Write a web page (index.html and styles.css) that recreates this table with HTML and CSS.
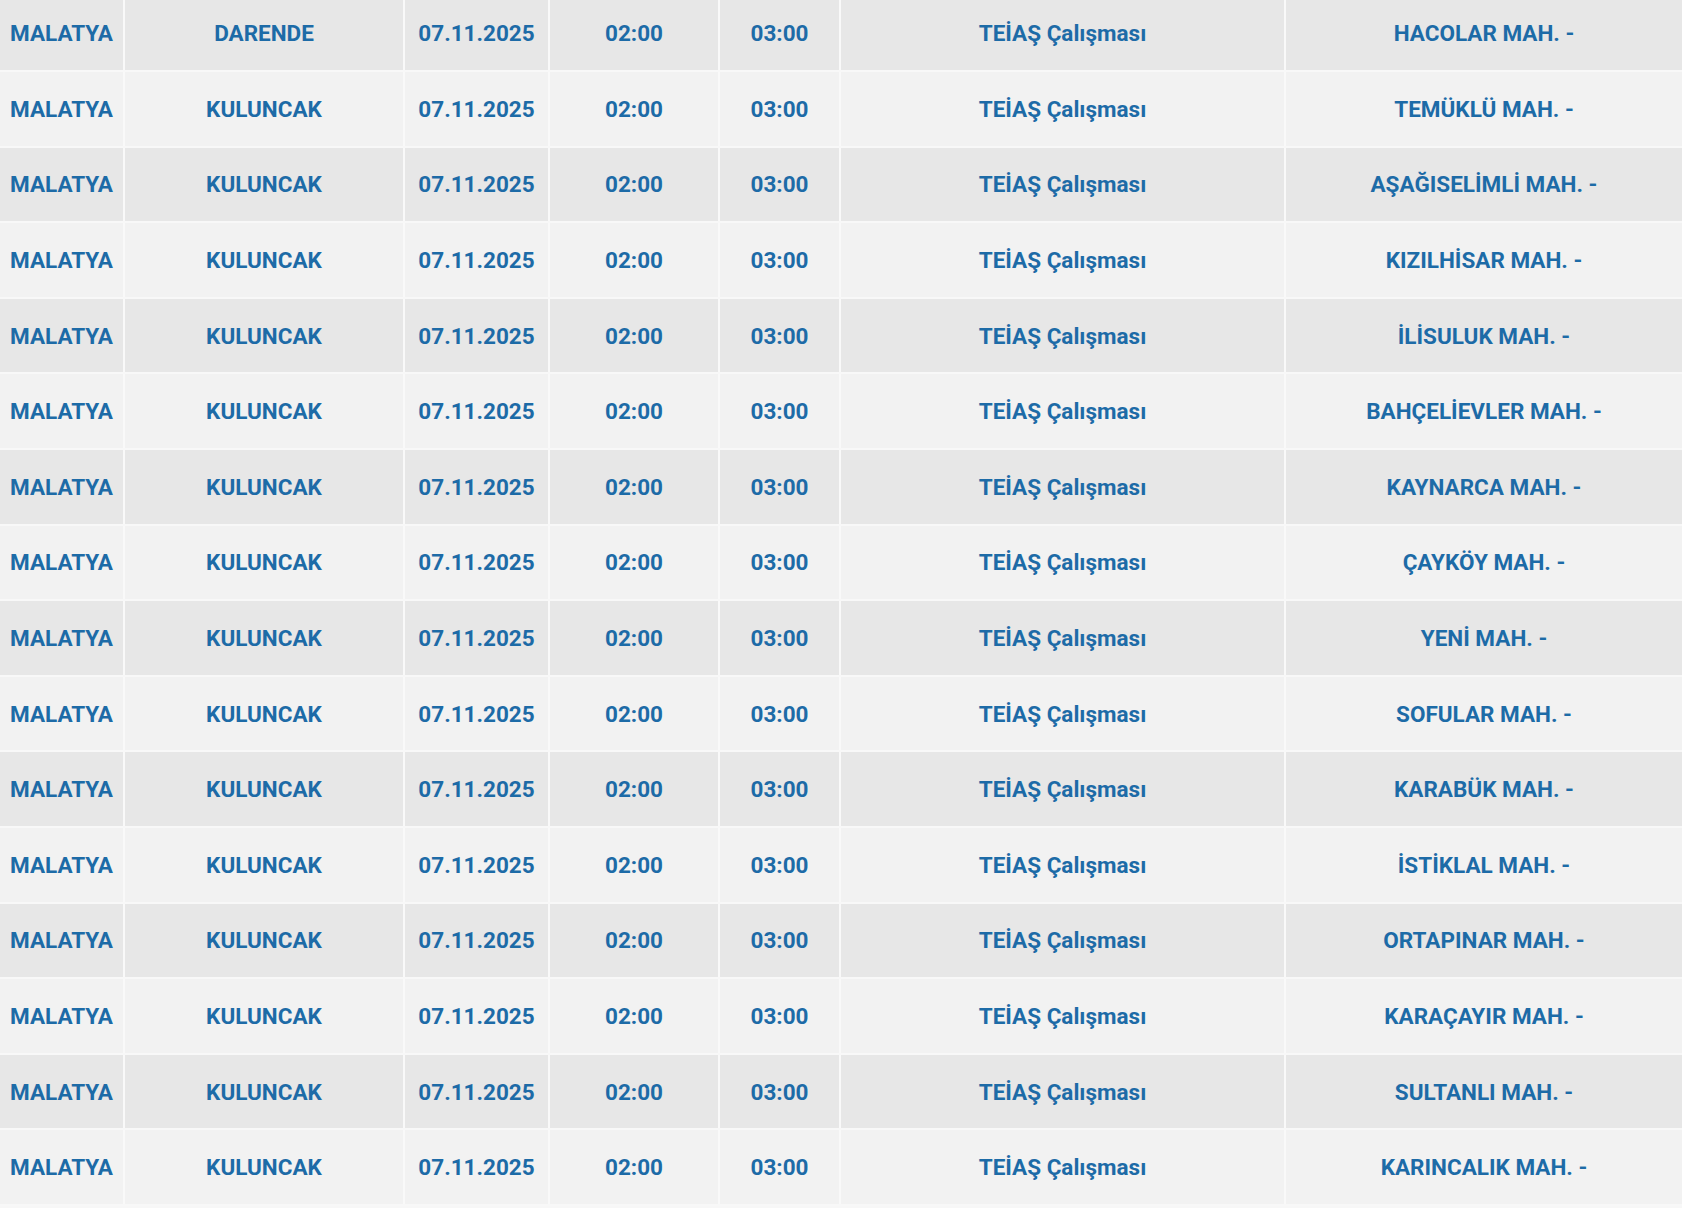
FILE: index.html
```html
<!DOCTYPE html>
<html lang="tr">
<head>
<meta charset="utf-8">
<title>Kesinti Listesi</title>
<link rel="stylesheet" href="styles.css">
</head>
<body>
<div class="table">
  <div class="row"><div class="c">MALATYA</div><div class="c">DARENDE</div><div class="c">07.11.2025</div><div class="c">02:00</div><div class="c">03:00</div><div class="c">TEİAŞ Çalışması</div><div class="c">HACOLAR MAH. -</div></div>
  <div class="row"><div class="c">MALATYA</div><div class="c">KULUNCAK</div><div class="c">07.11.2025</div><div class="c">02:00</div><div class="c">03:00</div><div class="c">TEİAŞ Çalışması</div><div class="c">TEMÜKLÜ MAH. -</div></div>
  <div class="row"><div class="c">MALATYA</div><div class="c">KULUNCAK</div><div class="c">07.11.2025</div><div class="c">02:00</div><div class="c">03:00</div><div class="c">TEİAŞ Çalışması</div><div class="c">AŞAĞISELİMLİ MAH. -</div></div>
  <div class="row"><div class="c">MALATYA</div><div class="c">KULUNCAK</div><div class="c">07.11.2025</div><div class="c">02:00</div><div class="c">03:00</div><div class="c">TEİAŞ Çalışması</div><div class="c">KIZILHİSAR MAH. -</div></div>
  <div class="row"><div class="c">MALATYA</div><div class="c">KULUNCAK</div><div class="c">07.11.2025</div><div class="c">02:00</div><div class="c">03:00</div><div class="c">TEİAŞ Çalışması</div><div class="c">İLİSULUK MAH. -</div></div>
  <div class="row"><div class="c">MALATYA</div><div class="c">KULUNCAK</div><div class="c">07.11.2025</div><div class="c">02:00</div><div class="c">03:00</div><div class="c">TEİAŞ Çalışması</div><div class="c">BAHÇELİEVLER MAH. -</div></div>
  <div class="row"><div class="c">MALATYA</div><div class="c">KULUNCAK</div><div class="c">07.11.2025</div><div class="c">02:00</div><div class="c">03:00</div><div class="c">TEİAŞ Çalışması</div><div class="c">KAYNARCA MAH. -</div></div>
  <div class="row"><div class="c">MALATYA</div><div class="c">KULUNCAK</div><div class="c">07.11.2025</div><div class="c">02:00</div><div class="c">03:00</div><div class="c">TEİAŞ Çalışması</div><div class="c">ÇAYKÖY MAH. -</div></div>
  <div class="row"><div class="c">MALATYA</div><div class="c">KULUNCAK</div><div class="c">07.11.2025</div><div class="c">02:00</div><div class="c">03:00</div><div class="c">TEİAŞ Çalışması</div><div class="c">YENİ MAH. -</div></div>
  <div class="row"><div class="c">MALATYA</div><div class="c">KULUNCAK</div><div class="c">07.11.2025</div><div class="c">02:00</div><div class="c">03:00</div><div class="c">TEİAŞ Çalışması</div><div class="c">SOFULAR MAH. -</div></div>
  <div class="row"><div class="c">MALATYA</div><div class="c">KULUNCAK</div><div class="c">07.11.2025</div><div class="c">02:00</div><div class="c">03:00</div><div class="c">TEİAŞ Çalışması</div><div class="c">KARABÜK MAH. -</div></div>
  <div class="row"><div class="c">MALATYA</div><div class="c">KULUNCAK</div><div class="c">07.11.2025</div><div class="c">02:00</div><div class="c">03:00</div><div class="c">TEİAŞ Çalışması</div><div class="c">İSTİKLAL MAH. -</div></div>
  <div class="row"><div class="c">MALATYA</div><div class="c">KULUNCAK</div><div class="c">07.11.2025</div><div class="c">02:00</div><div class="c">03:00</div><div class="c">TEİAŞ Çalışması</div><div class="c">ORTAPINAR MAH. -</div></div>
  <div class="row"><div class="c">MALATYA</div><div class="c">KULUNCAK</div><div class="c">07.11.2025</div><div class="c">02:00</div><div class="c">03:00</div><div class="c">TEİAŞ Çalışması</div><div class="c">KARAÇAYIR MAH. -</div></div>
  <div class="row"><div class="c">MALATYA</div><div class="c">KULUNCAK</div><div class="c">07.11.2025</div><div class="c">02:00</div><div class="c">03:00</div><div class="c">TEİAŞ Çalışması</div><div class="c">SULTANLI MAH. -</div></div>
  <div class="row"><div class="c">MALATYA</div><div class="c">KULUNCAK</div><div class="c">07.11.2025</div><div class="c">02:00</div><div class="c">03:00</div><div class="c">TEİAŞ Çalışması</div><div class="c">KARINCALIK MAH. -</div></div>
</div>
</body>
</html>
```

FILE: styles.css
```css
html, body {
  margin: 0;
  padding: 0;
  background: #f7f7f7;
}

body {
  font-family: Roboto, "Liberation Sans", Arial, sans-serif;
  overflow: hidden;
}

.table {
  margin-top: -3.6px;
}

.row {
  display: grid;
  grid-template-columns: 125px 280px 145px 170px 121px 445px 1fr;
  height: 75.6px;
  box-sizing: border-box;
  border-bottom: 2px solid #f8f8f8;
}

.row:nth-child(odd) {
  background: #e7e7e7;
}

.row:nth-child(even) {
  background: #f2f2f2;
}

.c {
  display: flex;
  align-items: center;
  justify-content: center;
  box-sizing: border-box;
  border-right: 2px solid #f9f9f9;
  color: #1d6ba7;
  font-weight: 700;
  font-size: 22.5px;
  white-space: nowrap;
}

.c:last-child {
  border-right: none;
}
```
